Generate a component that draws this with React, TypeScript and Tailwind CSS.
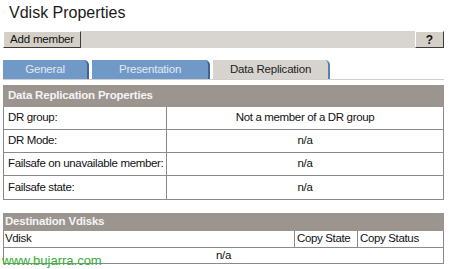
const rows = [
  { label: "DR group:", value: "Not a member of a DR group" },
  { label: "DR Mode:", value: "n/a" },
  { label: "Failsafe on unavailable member:", value: "n/a" },
  { label: "Failsafe state:", value: "n/a" },
];

const tabs = [
  { label: "General", w: "w-[86px]", active: false },
  { label: "Presentation", w: "w-[118px]", active: false },
  { label: "Data Replication", w: "w-[117px]", active: true },
];

export default function App() {
  return (
    <div
      className="relative h-[269px] w-[450px] overflow-hidden whitespace-nowrap bg-white text-[#111]"
      style={{ fontFamily: '"Liberation Sans", Arial, sans-serif' }}
    >
      <h1 className="h-[31px] pl-[9px] pt-[4px] text-[16px] leading-[18px] text-[#1a1a1a]">Vdisk Properties</h1>

      {/* toolbar */}
      <div className="mx-[3px] flex h-[17px] w-[441px] items-stretch justify-between bg-[#d8d5d0]">
        <button className="flex w-[78px] items-center justify-center border border-b-[#3c3c3c] border-l-white border-r-[#3c3c3c] border-t-white bg-[#d4d0c8] text-[11.5px] leading-none tracking-[-0.2px]">
          Add member
        </button>
        <button className="flex w-[29px] items-center justify-center border border-b-[#3c3c3c] border-l-white border-r-[#3c3c3c] border-t-white bg-[#d4d0c8] text-[12px] font-bold leading-none">
          ?
        </button>
      </div>

      {/* tabs */}
      <div className="mx-[3px] mt-[12px] flex h-[20px] w-[441px] gap-[3px] border-b border-[#cfcfcf]">
        {tabs.map((t) => (
          <div
            key={t.label}
            className={
              t.active
                ? `${t.w} flex items-center justify-center rounded-tr-[5px] border-r-2 border-[#5a7fae] bg-[#d7d4cf] text-[11.5px] tracking-[-0.2px] text-[#222]`
                : `${t.w} flex items-center justify-center rounded-tr-[5px] border-r-2 border-[#3f6594] bg-[#7099c8] text-[11.5px] tracking-[-0.2px] text-[#e3e9f2]`
            }
          >
            {t.label}
          </div>
        ))}
      </div>

      {/* data replication properties */}
      <div className="mx-[3px] mt-[5px] w-[441px]">
        <div className="flex h-[22px] items-center bg-[#9c958f] pl-[5px] text-[11.5px] font-bold tracking-[-0.2px] text-[#f4f4f4]">
          Data Replication Properties
        </div>
        <div className="border-x border-b border-[#8a8a8a]">
          {rows.map((r, i) => (
            <div
              key={r.label}
              className={`flex h-[23px] text-[11.5px] tracking-[-0.35px] ${i < rows.length - 1 ? "border-b border-[#8a8a8a]" : ""}`}
            >
              <div className="flex w-[163px] items-center border-r border-[#8a8a8a] pl-[4px]">{r.label}</div>
              <div className="flex flex-1 items-center justify-center">{r.value}</div>
            </div>
          ))}
        </div>
      </div>

      {/* destination vdisks */}
      <div className="mx-[3px] mt-[13px] w-[441px]">
        <div className="flex h-[18px] items-center bg-[#9c958f] pl-[2px] text-[11.5px] font-bold tracking-[-0.2px] text-[#f4f4f4]">
          Destination Vdisks
        </div>
        <div className="border-x border-b border-[#8a8a8a] text-[11.5px] tracking-[-0.35px]">
          <div className="flex h-[17px] border-b border-[#8a8a8a]">
            <div className="flex w-[290px] items-center pl-[1px]">Vdisk</div>
            <div className="flex w-[63px] items-center border-l border-[#8a8a8a] pl-[2px]">Copy State</div>
            <div className="flex flex-1 items-center border-l border-[#8a8a8a] pl-[2px]">Copy Status</div>
          </div>
          <div className="flex h-[15px] items-center justify-center">n/a</div>
        </div>
      </div>

      <div className="absolute left-[2px] top-[253px] text-[13px] leading-[15px] text-[#33b033]">www.bujarra.com</div>
    </div>
  );
}
